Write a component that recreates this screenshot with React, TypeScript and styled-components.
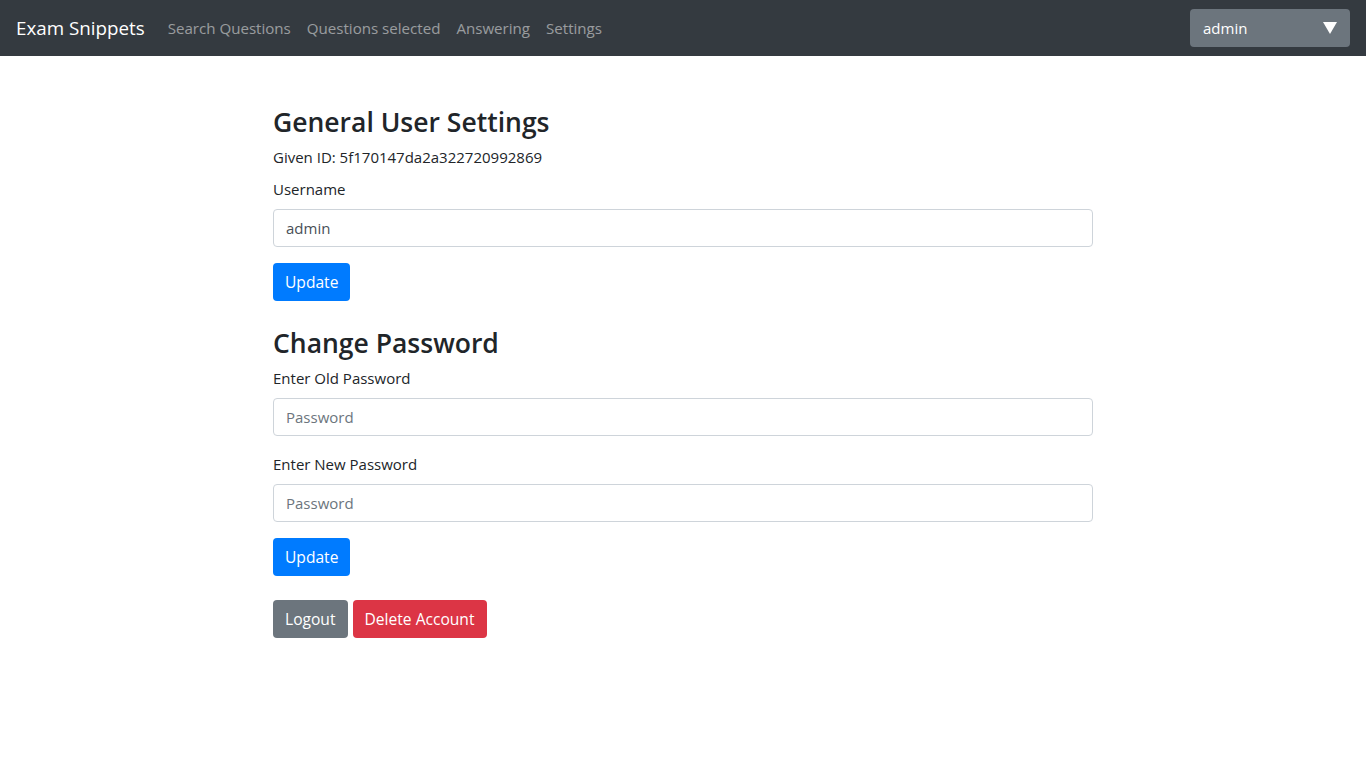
import React, { useState } from 'react';
import styled, { createGlobalStyle } from 'styled-components';

const GlobalStyle = createGlobalStyle`
  body {
    margin: 0;
    font-family: "Open Sans", "Noto Sans", Arial, sans-serif;
    font-size: 16px;
    line-height: 1.5;
    color: #212529;
    background: #fff;
  }
  * {
    box-sizing: border-box;
  }
`;

const Navbar = styled.nav`
  display: flex;
  align-items: center;
  justify-content: space-between;
  height: 56px;
  padding: 0 16px;
  background-color: #343a40;
`;

const NavLeft = styled.div`
  display: flex;
  align-items: center;
`;

const Brand = styled.a`
  margin-right: 15px;
  font-size: 18.8px;
  line-height: 30px;
  color: #fff;
  text-decoration: none;
`;

const NavLink = styled.a<{ $active?: boolean }>`
  padding: 8px;
  font-size: 15.1px;
  color: ${(p) => (p.$active ? 'rgba(255, 255, 255, 0.75)' : 'rgba(255, 255, 255, 0.5)')};
  text-decoration: none;
  cursor: pointer;
`;

const UserSelect = styled.div`
  display: flex;
  align-items: center;
  justify-content: space-between;
  width: 160px;
  height: 38px;
  padding: 0 13px;
  border-radius: 4px;
  background-color: #6c757d;
  color: #fff;
  font-size: 15px;
`;

const Caret = styled.span`
  width: 0;
  height: 0;
  border-left: 7px solid transparent;
  border-right: 7px solid transparent;
  border-top: 12px solid #fff;
`;

const Container = styled.main`
  width: 820px;
  margin: 49px auto 0;
`;

const Heading = styled.h3<{ $spaced?: boolean }>`
  margin: ${(p) => (p.$spaced ? '25px' : '0')} 0 6px;
  font-size: 26.5px;
  font-weight: 600;
  line-height: 34px;
`;

const Info = styled.p`
  margin: 0 0 8px;
  font-size: 15px;
  line-height: 24px;
`;

const FormGroup = styled.div`
  margin-bottom: 16px;
`;

const Label = styled.label`
  display: block;
  margin-bottom: 8px;
  font-size: 15px;
  line-height: 24px;
`;

const Input = styled.input`
  display: block;
  width: 100%;
  height: 38px;
  padding: 6px 12px;
  border: 1px solid #ced4da;
  border-radius: 4px;
  font-family: inherit;
  font-size: 15px;
  color: #495057;

  &::placeholder {
    color: #6c757d;
  }
`;

const ButtonRow = styled.div`
  display: flex;
  gap: 5px;
  margin-top: 24px;
`;

const Button = styled.button<{ $variant: 'primary' | 'secondary' | 'danger' }>`
  height: 38px;
  padding: 0 12px;
  border: none;
  border-radius: 4px;
  font-family: inherit;
  font-size: 15.6px;
  color: #fff;
  cursor: pointer;
  background-color: ${(p) =>
    p.$variant === 'primary' ? '#007bff' : p.$variant === 'danger' ? '#dc3545' : '#6c757d'};
`;

const App: React.FC = () => {
  const [username, setUsername] = useState('admin');
  const [oldPassword, setOldPassword] = useState('');
  const [newPassword, setNewPassword] = useState('');

  return (
    <>
      <GlobalStyle />
      <Navbar>
        <NavLeft>
          <Brand>Exam Snippets</Brand>
          <NavLink>Search Questions</NavLink>
          <NavLink>Questions selected</NavLink>
          <NavLink>Answering</NavLink>
          <NavLink>Settings</NavLink>
        </NavLeft>
        <UserSelect>
          <span>admin</span>
          <Caret />
        </UserSelect>
      </Navbar>
      <Container>
        <Heading>General User Settings</Heading>
        <Info>Given ID: 5f170147da2a322720992869</Info>
        <FormGroup>
          <Label htmlFor="username">Username</Label>
          <Input id="username" value={username} onChange={(e) => setUsername(e.target.value)} />
        </FormGroup>
        <Button $variant="primary">Update</Button>

        <Heading $spaced>Change Password</Heading>
        <FormGroup>
          <Label htmlFor="old">Enter Old Password</Label>
          <Input
            id="old"
            type="password"
            placeholder="Password"
            value={oldPassword}
            onChange={(e) => setOldPassword(e.target.value)}
          />
        </FormGroup>
        <FormGroup>
          <Label htmlFor="new">Enter New Password</Label>
          <Input
            id="new"
            type="password"
            placeholder="Password"
            value={newPassword}
            onChange={(e) => setNewPassword(e.target.value)}
          />
        </FormGroup>
        <Button $variant="primary">Update</Button>

        <ButtonRow>
          <Button $variant="secondary">Logout</Button>
          <Button $variant="danger">Delete Account</Button>
        </ButtonRow>
      </Container>
    </>
  );
};

export default App;
